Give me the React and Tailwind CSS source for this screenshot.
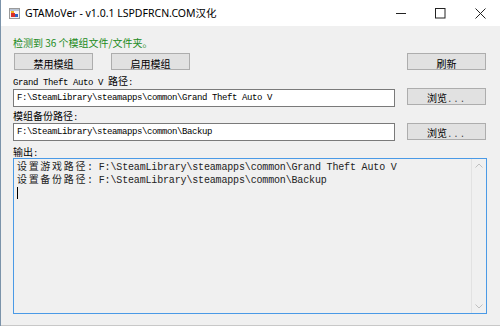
import React from "react";

function Cj({ children }) {
  return <span className="font-['Noto_Sans_CJK_SC',sans-serif] text-[10px] tracking-[0px] leading-none">{children}</span>;
}
function CjOut({ children }) {
  return <span className="font-['Noto_Sans_CJK_SC',sans-serif] text-[10px] tracking-[1.68px] leading-none">{children}</span>;
}

function Btn({ children, w }) {
  return (
    <div className={`h-[17px] ${w} bg-[#e1e1e1] border border-[#adadad] flex items-center justify-center text-black leading-none`}>
      <span className="leading-none whitespace-pre">{children}</span>
    </div>
  );
}

function Browse() {
  return (
    <Btn w="w-[79px]">
      <Cj>浏览</Cj>
      <span className="font-['Liberation_Mono',monospace] text-[9px] tracking-[1px] text-[#444] leading-none">...</span>
    </Btn>
  );
}

export default function App() {
  const mono = "font-['Liberation_Mono',monospace] text-[9px] tracking-[-0.4px] text-black leading-none whitespace-pre";
  return (
    <div className="w-[500px] h-[326px] bg-[#f0f0f0] border-l border-[#7b93aa] flex flex-col overflow-hidden relative">
      {/* title bar */}
      <div className="h-[26px] bg-white flex items-center shrink-0">
        <svg className="ml-[8px]" width="11" height="11" viewBox="0 0 11 11">
          <rect x="0.5" y="0.5" width="10" height="10" fill="#f4f4f4" stroke="#9a9a9a" />
          <rect x="1" y="1" width="9" height="2" fill="#b8c4d4" />
          <rect x="2" y="3" width="3" height="2" fill="#f2b01e" />
          <rect x="2" y="5" width="4" height="4" fill="#d9302a" />
          <rect x="6" y="6" width="3" height="3" fill="#2c63c8" />
        </svg>
        <span className="ml-[5px] font-['Noto_Sans','Noto_Sans_CJK_SC',sans-serif] text-[10.5px] text-black leading-none">
          GTAMoVer - v1.0.1 LSPDFRCN.COM汉化
        </span>
        <div className="ml-auto flex items-center h-full">
          <div className="w-[39px] h-full flex items-center justify-center">
            <svg width="11" height="11" viewBox="0 0 11 11"><path d="M0 5.5H10" stroke="#222" strokeWidth="1" /></svg>
          </div>
          <div className="w-[39px] h-full flex items-center justify-center">
            <svg width="11" height="11" viewBox="0 0 11 11"><rect x="0.5" y="0.5" width="9.5" height="9.5" fill="none" stroke="#222" strokeWidth="1" /></svg>
          </div>
          <div className="w-[40px] h-full flex items-center justify-center">
            <svg width="11" height="11" viewBox="0 0 11 11"><path d="M0.5 0.5L10.5 10.5M10.5 0.5L0.5 10.5" stroke="#222" strokeWidth="1" /></svg>
          </div>
        </div>
      </div>

      {/* body */}
      <div className="flex flex-col pl-[12px] pr-[13px]">
        <div className="mt-[11px] h-[12px] flex items-center font-['Noto_Sans_CJK_SC',sans-serif] text-[10px] text-[#228b22] leading-none whitespace-pre">
          检测到 36 个模组文件/文件夹。
        </div>

        <div className="mt-[4px] flex items-center">
          <div className="ml-[1px]"><Btn w="w-[79px]"><Cj>禁用模组</Cj></Btn></div>
          <div className="ml-[18px]"><Btn w="w-[79px]"><Cj>启用模组</Cj></Btn></div>
          <div className="ml-auto mr-[1px]"><Btn w="w-[79px]"><Cj>刷新</Cj></Btn></div>
        </div>

        <div className={`mt-[6px] h-[12px] flex items-center ${mono}`}>
          <span className="leading-none">Grand Theft Auto V <Cj>路径</Cj>:</span>
        </div>

        <div className="flex items-start h-[19px]">
          <div className={`mt-[1px] w-[382px] h-[18px] bg-white border border-[#7a7a7a] flex items-center pl-[3px] ${mono}`}>
            F:\SteamLibrary\steamapps\common\Grand Theft Auto V
          </div>
          <div className="ml-auto mr-[1px]">
            <Browse />
          </div>
        </div>

        <div className={`mt-[4px] h-[12px] flex items-center ${mono}`}>
          <span className="leading-none"><Cj>模组备份路径</Cj>:</span>
        </div>

        <div className="flex items-start h-[18px]">
          <div className={`w-[382px] h-[18px] bg-white border border-[#7a7a7a] flex items-center pl-[3px] ${mono}`}>
            F:\SteamLibrary\steamapps\common\Backup
          </div>
          <div className="ml-auto mr-[1px]">
            <Browse />
          </div>
        </div>

        <div className={`mt-[6px] h-[11px] flex items-center ${mono}`}>
          <span className="leading-none"><Cj>输出</Cj>:</span>
        </div>

        <div className="h-[156px] border border-[#4a9ae6] bg-[#f0f0f0] flex">
          <div className="flex-1 pl-[3px] pt-[1px] font-['Liberation_Mono',monospace] text-[10px] tracking-[-0.16px] text-[#222] leading-[13px]">
            <div className="h-[13px] flex items-center whitespace-pre">
              <span className="leading-none"><CjOut>设置游戏路径</CjOut>: F:\SteamLibrary\steamapps\common\Grand Theft Auto V</span>
            </div>
            <div className="h-[13px] flex items-center whitespace-pre">
              <span className="leading-none"><CjOut>设置备份路径</CjOut>: F:\SteamLibrary\steamapps\common\Backup</span>
            </div>
            <div className="h-[13px] flex items-center">
              <div className="w-[1px] h-[12px] bg-black" />
            </div>
          </div>
          <div className="w-[15px] border-l border-[#e2e2e2] bg-[#f0f0f0] flex flex-col items-center justify-between py-[4px]">
            <svg width="8" height="5" viewBox="0 0 8 5"><path d="M0.5 4.5L4 1L7.5 4.5" fill="none" stroke="#c0c0c0" strokeWidth="1" /></svg>
            <svg width="8" height="5" viewBox="0 0 8 5"><path d="M0.5 0.5L4 4L7.5 0.5" fill="none" stroke="#c0c0c0" strokeWidth="1" /></svg>
          </div>
        </div>
      </div>
      <div className="mt-auto h-[1px] bg-[#c8c8c8]" />
    </div>
  );
}
